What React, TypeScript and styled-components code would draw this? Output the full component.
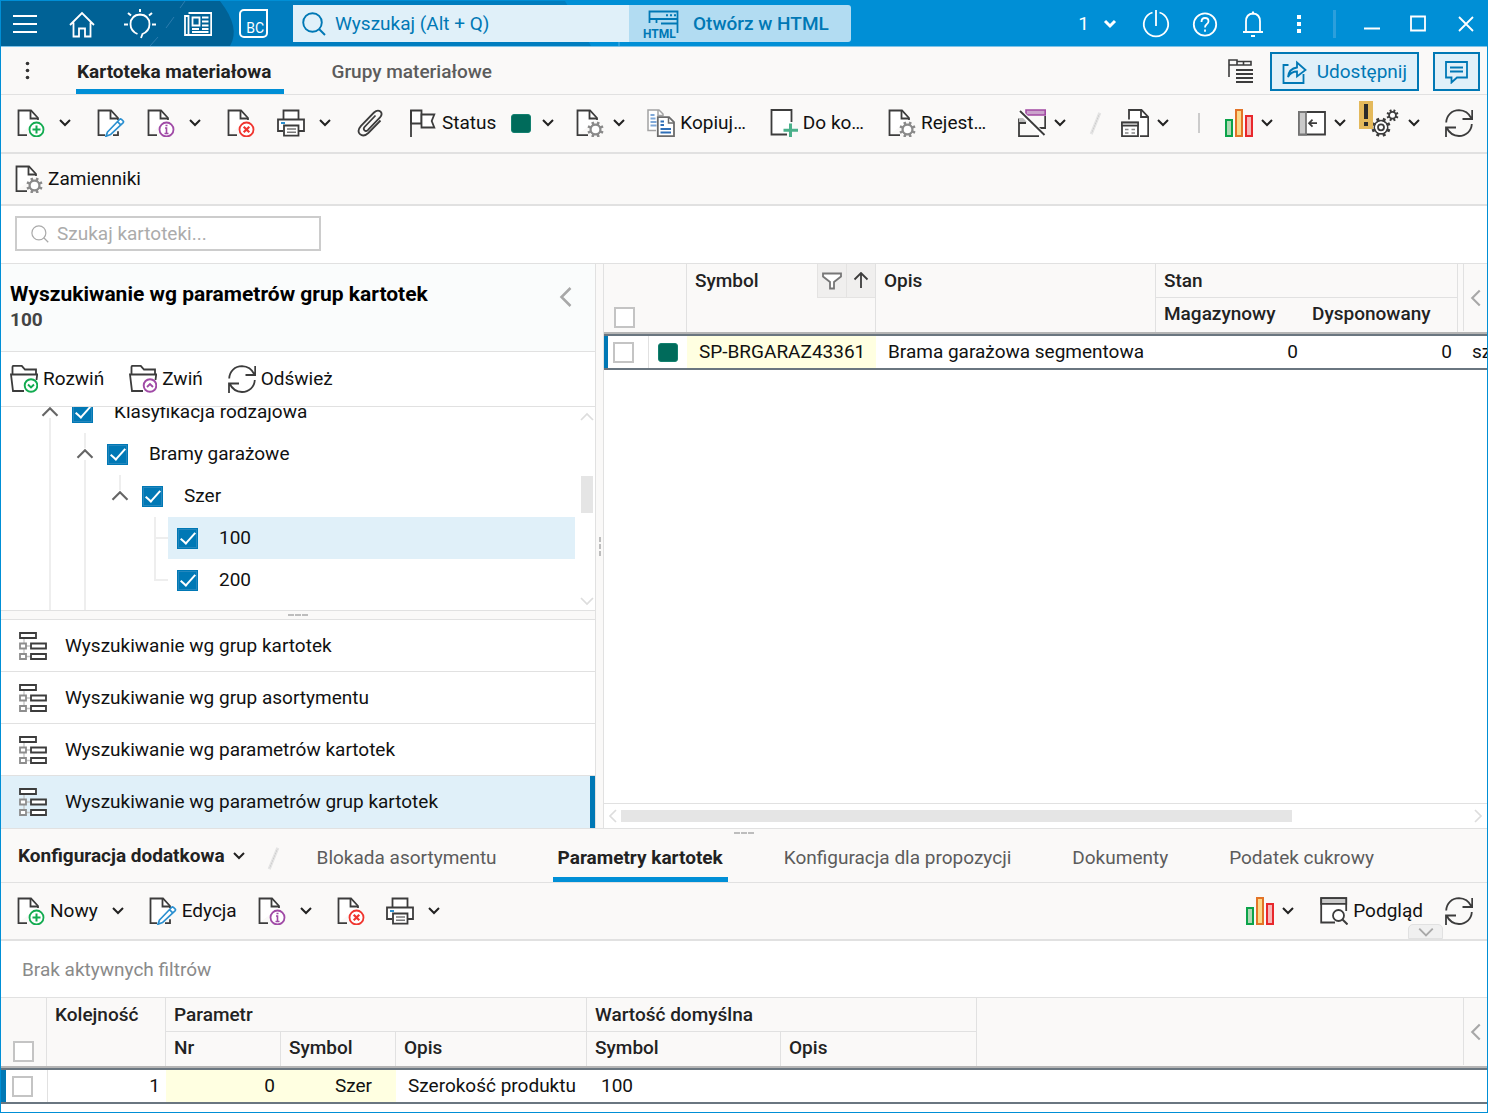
import React from "react";
import styled, { createGlobalStyle, css } from "styled-components";

const c = {
  brand: "#008fd6",
  brandMid: "#007dbf",
  brandDeep: "#006296",
  accent: "#0078b5",
  pale: "#e0f0f9",
  chrome: "#faf9f8",
  line: "#e1e1e1",
  ink: "#3c3c3c",
  key: "#ffffe1",
  status: "#006b5b",
};

const GlobalStyle = createGlobalStyle`
  *, *::before, *::after { box-sizing: border-box; }
  body { margin: 0; font-family: Roboto, "Noto Sans", sans-serif; font-size: 19px; line-height: 24px; color: #111; background: #fff; }
  button, input { font: inherit; color: inherit; }
  button { display: inline-flex; align-items: center; padding: 0; border: 0; background: none; white-space: nowrap; }
  svg { display: block; flex: none; }
  h2, p, ul { margin: 0; padding: 0; }
  ul { list-style: none; }
`;

/* ---------- icons ---------- */

const Svg = ({ w = 28, h = 28, children }: { w?: number; h?: number; children: React.ReactNode }) => (
  <svg width={w} height={h} viewBox={`0 0 ${w} ${h}`} fill="none" stroke={c.ink} strokeWidth="1.8" aria-hidden="true">
    {children}
  </svg>
);

const Chevron = ({ color = "#222" }: { color?: string }) => (
  <svg width="12" height="8" viewBox="0 0 12 8" fill="none" stroke={color} strokeWidth="2" aria-hidden="true">
    <path d="M1 1l5 5 5-5" />
  </svg>
);

const Page = ({ tail = 11 }: { tail?: number }) => (
  <>
    <path d={`M${tail} 26H1.5V1.5H14l6.5 7.5V11.500L2 25z`} fill="#fff" stroke="none" />
    <path d={`M${tail} 26.200H1.500V1.500H14l7 7.500V11`} />
    <path d="M13.500 2v7.500H21" />
  </>
);

const Disc = ({ color, children }: { color: string; children: React.ReactNode }) => (
  <g stroke={color}>
    <circle cx="19.500" cy="20.500" r="7" fill="#fff" />
    {children}
  </g>
);

const NewIcon = () => (
  <Svg>
    <Page tail={10} />
    <Disc color="#12ab50"><path d="M19.500 16.500v8M15.500 20.500h8" strokeWidth="2" /></Disc>
  </Svg>
);
const EditIcon = () => (
  <Svg>
    <path d="M8 26.200H1.500V1.500H14l7 7.500V11" fill="#fff" />
    <path d="M13.500 2v7.500H21M16 26.200h5v-4" />
    <path d="M10.500 23l12-12.500q1-1 2 0l1.500 1.300q1 1 0 2L13.500 25.500 9 27.200zM20.500 12.700l3.200 3.100" stroke="#2a8fd0" fill="#fff" strokeWidth="1.700" />
  </Svg>
);
const InfoIcon = () => (
  <Svg>
    <Page tail={10} />
    <Disc color="#a04aa6"><path d="M18 19h1.500v5.500M17.500 24.500h4M18.500 16.500h2" strokeWidth="1.600" /></Disc>
  </Svg>
);
const DeleteIcon = () => (
  <Svg>
    <Page tail={10} />
    <Disc color="#f0352f"><path d="M16.700 17.700l5.600 5.600M22.300 17.700l-5.600 5.600" strokeWidth="2.200" /></Disc>
  </Svg>
);
const gearTeeth = (cx: number, cy: number, r: number, out: number) =>
  [0, 45, 90, 135, 180, 225, 270, 315]
    .map((a) => {
      const t = ((a + 22.5) * Math.PI) / 180;
      return `M${cx + r * Math.cos(t)} ${cy + r * Math.sin(t)}L${cx + out * Math.cos(t)} ${cy + out * Math.sin(t)}`;
    })
    .join("");
const PageGearIcon = () => (
  <Svg>
    <Page tail={12} />
    <circle cx="19.500" cy="20.500" r="4.900" stroke="#8a8a8a" strokeWidth="2.200" fill="#fff" />
    <path d={gearTeeth(19.5, 20.5, 5, 8.2)} stroke="#8a8a8a" strokeWidth="2.600" />
  </Svg>
);
const PrintIcon = () => (
  <Svg>
    <path d="M6.500 10V1.500h15V10" fill="#fff" />
    <path d="M6 22H1V10.500h26V22h-5" fill="#fff" />
    <path d="M7 16.500h14.500v10.200H7z" fill="#fff" />
    <path d="M4 14h4" stroke="#2a8fd0" strokeWidth="2" />
    <path d="M10 20h9M10 23.300h9" stroke="#777" strokeWidth="1.400" />
  </Svg>
);
const ClipIcon = () => (
  <Svg>
    <path d="M18.500 6.500L7.500 18q-1.500 2 0 3.400 1.500 1.400 3.300-.3L23 8.500q3-3.600.4-6Q20.500.300 17 3.500L4 16.800q-4.400 5-1 8.400 3.600 3.200 8.300-1.200L23.500 11.500" />
  </Svg>
);
const FlagIcon = () => (
  <Svg>
    <path d="M2 1.500h10.500v13H2z" fill="#fff" />
    <path d="M12.500 5.500h12.800l-2.600 6.500 2.600 6.500H12.500z" fill="#fff" />
    <path d="M2 1v27" />
  </Svg>
);
const CopyIcon = () => (
  <Svg>
    <path d="M9 21.500H1V1h11l4 4v2" stroke="#a3a3a3" fill="#fff" strokeWidth="1.500" />
    <path d="M11 1v5.500h5" stroke="#a3a3a3" strokeWidth="1.500" />
    <path d="M3.500 6h4M3.500 9.500h5M3.500 13h6M3.500 16.500h6" stroke="#7fa8d8" />
    <path d="M10.800 8.200H22l5 5v13.900H10.800z" stroke="#6b6b6b" fill="#fff" />
    <path d="M21.500 8.500V14H27" stroke="#6b6b6b" strokeWidth="1.500" />
    <path d="M13.500 12.500h3.500M13.500 16h3.500M13.500 20h10.500M13.500 23.500h10.500" stroke="#2f6fb7" />
  </Svg>
);
const AddSheetIcon = () => (
  <Svg>
    <path d="M17 25.500H1.500V1H21.500V13" fill="#fff" />
    <path d="M20.500 14.500V28M13.500 21.300H28" stroke="#4ab08a" strokeWidth="3" />
  </Svg>
);
const WindowOffIcon = () => (
  <Svg>
    <path d="M8 1h19.200v5H8z" stroke="#a24aa3" fill="#cba3cc" strokeWidth="1.600" />
    <path d="M27.200 7v12H21" fill="none" />
    <path d="M1 9.500V27.200h20M1 14h7" />
    <path d="M1 9h5l3 4H1z" fill="#bbb" stroke="none" />
    <path d="M1.500 2L26 26.500" stroke="#fff" strokeWidth="5" />
    <path d="M2 2l24.500 24" strokeWidth="1.900" />
  </Svg>
);
const FormPageIcon = () => (
  <Svg>
    <path d="M8 10.500V1h12.500l6.700 7V27.200H19" fill="#fff" />
    <path d="M20 1v7h7" />
    <path d="M1 13.500h16v13.700H1z" fill="#fff" />
    <path d="M1 13.500h16v3.200H1z" fill="#bbb" strokeWidth="1.500" />
    <path d="M4 20.500h3.500M10.500 20.500H14M4 24h3.500M10.500 24H14" stroke="#888" strokeWidth="1.400" />
  </Svg>
);
const ChartIcon = () => (
  <Svg>
    <g strokeWidth="2">
      <path d="M1 11h6v16H1z" fill="#aed8b4" stroke="#0ba34a" />
      <path d="M11 1h6v26h-6z" fill="#fbd98a" stroke="#e37427" />
      <path d="M21 7h6v20h-6z" fill="#f6b7b8" stroke="#e8282c" />
    </g>
  </Svg>
);
const PanelIcon = () => (
  <Svg>
    <path d="M1 3h26v22.500H1z" fill="#fff" />
    <path d="M1 3h7v22.500H1z" fill="#c9c9c9" stroke="#777" />
    <path d="M11 14.200h8M14.500 10.700L11 14.200l3.500 3.500" strokeWidth="1.700" />
  </Svg>
);
const GearsIcon = () => (
  <Svg>
    <circle cx="10" cy="18.300" r="6.600" fill="#fff" />
    <path d={gearTeeth(10, 18.3, 6.800, 9.600)} strokeWidth="3" />
    <circle cx="10" cy="18.300" r="5.800" stroke="none" fill="#fff" />
    <circle cx="10" cy="18.300" r="3" />
    <circle cx="21.500" cy="6.300" r="3.400" fill="#fff" />
    <path d={gearTeeth(21.5, 6.3, 3.6, 6)} strokeWidth="2" />
  </Svg>
);
const RefreshIcon = () => (
  <Svg>
    <path d="M1.200 13.500C1.500 6 7 1.200 14 1.200q8.500.3 12.500 8.300M27.200 1v9H17.500" />
    <path d="M26.800 15C26.500 22 21 27 14 27q-8.500-.3-12.500-8.500M1 28v-9.500h10" />
  </Svg>
);
const FolderIcon = ({ up = false }: { up?: boolean }) => (
  <Svg>
    <path d="M2.500 9V2q0-1.200 1.200-1.200h8L15 4.500h11V9" fill="#fff" />
    <path d="M14 26H3L1 9.500h26.200L26.500 15" fill="#fff" />
    <g stroke={up ? "#a04aa6" : "#12ab50"} strokeWidth="1.900">
      <circle cx="21" cy="20.500" r="6.300" fill="#fff" />
      <path d={up ? "M18 22l3-3 3 3" : "M18 19.500l3 3 3-3"} />
    </g>
  </Svg>
);
const PreviewIcon = () => (
  <Svg>
    <path d="M15 25.500H1.200V1.200h25V14" fill="#fff" />
    <path d="M1.200 1.200h25V6.800h-25z" fill="#c9c9c9" />
    <circle cx="18.500" cy="18.500" r="5.500" fill="#fff" />
    <path d="M22.500 22.500L27.500 27.500" strokeWidth="2" />
  </Svg>
);
const TreeIcon = () => (
  <Svg>
    <path d="M5 7v16M6 14h6M6 24.500h6" stroke="#c4c4c4" strokeWidth="1.300" />
    <path d="M1 1h16v5H1z" fill="#fff" />
    <path d="M1 11.500h6v5H1zM1 22h6v5H1z" fill="#fff" stroke="#8d8d8d" />
    <path d="M12 11.500h15v5H12zM12 22h15v5H12z" fill="#fff" />
  </Svg>
);
const Magnifier = ({ size, color }: { size: number; color: string }) => (
  <svg width={size} height={size} viewBox="0 0 24 24" fill="none" stroke={color} strokeWidth={size > 20 ? 1.900 : 1.600} aria-hidden="true">
    <circle cx="10.500" cy="10.500" r="9.300" />
    <path d="M17 17l6 6" />
  </svg>
);
const AngleIcon = ({ dir, color = "#a8a8a8", size = 16 }: { dir: "left" | "right" | "up" | "down"; color?: string; size?: number }) => {
  const d = { left: "M11 2L5 8l6 6", right: "M5 2l6 6-6 6", up: "M2 11l6-6 6 6", down: "M2 5l6 6 6-6" }[dir];
  return (
    <svg width={size} height={size} viewBox="0 0 16 16" fill="none" stroke={color} strokeWidth="1.700" aria-hidden="true">
      <path d={d} />
    </svg>
  );
};

/* ---------- shell ---------- */

const Window = styled.div`
  display: flex;
  flex-direction: column;
  min-height: 100vh;
  border: 1px solid ${c.brand};
  border-top: 0;
`;

const TitleBar = styled.header`
  position: relative;
  display: flex;
  align-items: center;
  height: 47px;
  padding: 1px 0 0 11px;
  color: #fff;
  background: ${c.brand};
  border-bottom: 1px solid #7ec3e8;
  svg { stroke: currentColor; }
`;
const Backdrop = styled.div`
  position: absolute;
  inset: 0;
  overflow: hidden;
`;
const MainNav = styled.nav`
  position: relative;
  display: flex;
  align-items: center;
  gap: 28px;
`;
const BarButton = styled.button`
  position: relative;
`;
const BadgeButton = styled(BarButton)`
  align-items: flex-end;
  justify-content: flex-end;
  width: 29px;
  height: 29px;
  margin: 0 25px 0 27px;
  padding: 0 2px;
  border: 2px solid #fff;
  border-radius: 5px 0 5px 5px;
  font-size: 14px;
  line-height: 16px;
`;
const GlobalSearch = styled.form`
  position: relative;
  display: flex;
  height: 37px;
  border-radius: 0 3px 3px 0;
  overflow: hidden;
  color: ${c.accent};
`;
const SearchField = styled.label`
  display: flex;
  align-items: center;
  gap: 9px;
  width: 336px;
  padding-left: 9px;
  background: ${c.pale};
`;
const BareInput = styled.input<{ $hint: string }>`
  flex: 1;
  min-width: 0;
  padding: 0;
  border: 0;
  outline: 0;
  background: none;
  &::placeholder { color: ${(p) => p.$hint}; opacity: 1; }
`;
const HtmlButton = styled.button`
  gap: 14px;
  padding: 0 22px 0 14px;
  font-weight: 500;
  background: #b2dcf2;
`;
const WindowTools = styled.div`
  position: relative;
  display: flex;
  align-items: center;
  margin-left: auto;
  padding-right: 11px;
`;
const ToolsCluster = styled.div<{ $gap: number; $after?: number }>`
  display: flex;
  align-items: center;
  gap: ${(p) => p.$gap}px;
  margin-right: ${(p) => p.$after ?? 0}px;
`;
const CountButton = styled.button`
  gap: 14px;
`;
const BarDivider = styled.span`
  width: 3px;
  height: 28px;
  background: #2c9fdc;
`;

/* ---------- tabs ---------- */

const TabBar = styled.div<{ $h: number; $pl: number }>`
  display: flex;
  align-items: stretch;
  height: ${(p) => p.$h}px;
  padding: 0 7px 0 ${(p) => p.$pl}px;
  background: ${c.chrome};
  border-bottom: 1px solid ${c.line};
`;
const TabList = styled.div<{ $gap: number; $ml: number }>`
  display: flex;
  gap: ${(p) => p.$gap}px;
  margin-left: ${(p) => p.$ml}px;
`;
const Tab = styled.button<{ $active?: boolean; $main?: boolean }>`
  padding: ${(p) => (p.$main ? "7px 13px 0 1px" : "4px 5px 0")};
  border-bottom: 5px solid transparent;
  color: #5c5c5c;
  font-weight: ${(p) => (p.$main ? 500 : 400)};
  ${(p) => p.$active && css`
    color: #222;
    font-weight: 700;
    border-bottom-color: ${c.brand};
  `}
`;
const TabActions = styled.div`
  display: flex;
  align-items: center;
  gap: 14px;
  margin-left: auto;
  padding-top: 2px;
`;
const OutlineButton = styled.button`
  gap: 10px;
  height: 39px;
  padding: 0 10px;
  color: ${c.accent};
  background: ${c.pale};
  border: 2px solid ${c.accent};
  svg { stroke: currentColor; }
`;
const SectionTitle = styled.button`
  gap: 8px;
  padding-bottom: 4px;
  font-weight: 700;
  color: #222;
`;
const Slash = styled.span`
  width: 1px;
  height: 21px;
  margin: 0 4px;
  background: #ccc;
  outline: 1px solid #e2e2e2;
  transform: rotate(22deg);
`;
const Bar = styled.span`
  width: 2px;
  height: 20px;
  margin: 0 4px;
  background: #ccc;
`;

/* ---------- toolbars ---------- */

const Toolbar = styled.div<{ $h: number; $plain?: boolean; $px?: number }>`
  position: relative;
  display: flex;
  align-items: center;
  justify-content: space-between;
  height: ${(p) => p.$h}px;
  padding: 0 14px ${(p) => (p.$plain ? 0 : 1)}px ${(p) => p.$px ?? 16}px;
  background: ${(p) => (p.$plain ? "#fff" : c.chrome)};
  border-bottom: ${(p) => (p.$plain ? 1 : 2)}px solid ${c.line};
`;
const Tools = styled.div<{ $gap: number }>`
  display: flex;
  align-items: center;
  gap: ${(p) => p.$gap}px;
`;
const ToolButton = styled.button`
  position: relative;
  gap: 5px;
  height: 36px;
`;
const Split = styled.div<{ $gap: number }>`
  display: flex;
  align-items: center;
  gap: ${(p) => p.$gap}px;
`;
const DropButton = styled.button`
  justify-content: center;
  width: 20px;
  height: 36px;
`;
const Swatch = styled.span<{ $ml?: number }>`
  display: block;
  width: 20px;
  height: 19px;
  margin-left: ${(p) => p.$ml ?? 0}px;
  background: ${c.status};
  border: 1px solid #12806f;
  border-radius: 3px;
`;
const WarnBadge = styled.span`
  position: absolute;
  left: -12px;
  top: -4px;
  display: flex;
  justify-content: center;
  width: 14px;
  height: 28px;
  background: #e4b95b;
`;
const MiniToggle = styled.button`
  position: absolute;
  right: 44px;
  bottom: 0;
  justify-content: center;
  width: 35px;
  height: 15px;
  background: #f0f0f0;
  border: 1px solid ${c.line};
  border-radius: 5px 5px 0 0;
`;

const Drop = ({ label }: { label: string }) => (
  <DropButton aria-label={label}><Chevron /></DropButton>
);

/* ---------- search row ---------- */

const FilterRow = styled.div`
  padding: 10px 14px 12px;
  border-bottom: 1px solid ${c.line};
`;
const FilterBox = styled.label`
  display: flex;
  align-items: center;
  gap: 8px;
  width: 306px;
  height: 35px;
  padding: 0 14px;
  border: 2px solid #ccc;
`;

/* ---------- work area ---------- */

const Work = styled.main`
  display: flex;
  flex: 1;
  min-height: 0;
  border-bottom: 1px solid ${c.line};
`;
const SidePane = styled.section`
  display: flex;
  flex-direction: column;
  flex: 0 0 594px;
`;
const PaneHead = styled.div`
  display: flex;
  align-items: flex-start;
  justify-content: space-between;
  height: 88px;
  padding: 17px 17px 0 9px;
  background: #fafcfc;
  border-bottom: 1px solid ${c.line};
  h2 { font-size: 21px; line-height: 26px; font-weight: 700; color: #000; }
  p { line-height: 26px; font-weight: 700; color: #444; }
  button { padding: 4px 0 0; }
`;
const VSplitter = styled.div`
  display: flex;
  flex: 0 0 9px;
  flex-direction: column;
  align-items: center;
  justify-content: center;
  gap: 2px;
  background: ${c.chrome};
  border: solid ${c.line};
  border-width: 0 1px;
`;
const HSplitter = styled.div`
  display: flex;
  align-items: center;
  justify-content: center;
  gap: 1px;
  height: 10px;
  background: ${c.chrome};
  border: solid ${c.line};
  border-width: 1px 0;
`;
const Grip = styled.i<{ $v?: boolean }>`
  width: ${(p) => (p.$v ? 2 : 6)}px;
  height: ${(p) => (p.$v ? 5 : 2)}px;
  background: #bdbdbd;
`;

const TreeBox = styled.div`
  display: flex;
  flex: 1 1 0;
  min-height: 0;
  overflow: hidden;
`;
const TreeList = styled.ul`
  flex: 1;
  margin-top: -16px;
  padding-left: 27px;
`;
const TreeRow = styled.li`
  display: flex;
  height: 42px;
`;
type GuideKind = "line" | "none" | "top" | "tee" | "elbow";
const rail = "linear-gradient(#eee,#eee)";
const guides: Record<GuideKind, string> = {
  line: `${rail} 21px 0 / 2px 100% no-repeat`,
  none: "none",
  top: `${rail} 21px 0 / 2px 21px no-repeat`,
  tee: `${rail} 21px 0 / 2px 100% no-repeat, ${rail} 21px 20px / 14px 2px no-repeat`,
  elbow: `${rail} 21px 0 / 2px 21px no-repeat, ${rail} 21px 20px / 14px 2px no-repeat`,
};
const Guide = styled.span<{ $kind: GuideKind }>`
  display: flex;
  align-items: center;
  justify-content: flex-end;
  width: 35px;
  padding-right: 3px;
  background: ${(p) => guides[p.$kind]};
`;
const TwistButton = styled.button`
  height: 12px;
  background: #fff;
`;
const TreeLabel = styled.label<{ $on?: boolean }>`
  display: flex;
  flex: 1;
  align-items: center;
  gap: 21px;
  padding-left: 9px;
  background: ${(p) => (p.$on ? c.pale : "none")};
`;
const Check = styled.input.attrs({ type: "checkbox" })`
  appearance: none;
  display: grid;
  place-items: center;
  flex: none;
  width: 21px;
  height: 21px;
  margin: 0;
  background: #fff;
  border: 2px solid #c4c4c4;
  &:checked {
    background: ${c.accent};
    border: 1px solid ${c.accent};
    box-shadow: inset 0 0 0 1px #2587bd;
  }
  &:checked::before {
    content: "";
    width: 8px;
    height: 15px;
    margin-bottom: 5px;
    border: solid #fff;
    border-width: 0 2px 2px 0;
    transform: rotate(42deg);
  }
`;
const VScroll = styled.div`
  display: flex;
  flex-direction: column;
  align-items: center;
  width: 20px;
  padding: 2px 0 1px 4px;
`;
const VThumb = styled.span`
  width: 12px;
  height: 37px;
  margin: 51px 0 auto;
  background: #e5e5e5;
`;
const ModeButton = styled.button<{ $on?: boolean }>`
  width: 100%;
  height: 52px;
  gap: 18px;
  padding-left: 18px;
  border-bottom: 1px solid ${c.line};
  ${(p) => p.$on && css`
    background: ${c.pale};
    border-right: 5px solid ${c.accent};
    border-bottom: 0;
  `}
`;

/* ---------- tables ---------- */

const GridPane = styled.section`
  display: flex;
  flex: 1;
  flex-direction: column;
  min-width: 0;
`;
const DataTable = styled.table`
  width: 100%;
  table-layout: fixed;
  border-collapse: separate;
  border-spacing: 0;
`;
const Th = styled.th<{ $edge?: boolean; $under?: boolean; $low?: number; $flush?: boolean; $sub?: boolean }>`
  height: 34px;
  padding: ${(p) => (p.$flush ? "0 0 0 8px" : p.$low ? `0 0 4px ${p.$low}px` : p.$sub ? "4px 0 0 8px" : "5px 0 0 8px")};
  overflow: hidden;
  color: #222;
  font-weight: 500;
  text-align: left;
  white-space: nowrap;
  vertical-align: ${(p) => (p.$low ? "bottom" : "top")};
  background: ${c.chrome};
  border: solid ${c.line};
  border-width: 0 ${(p) => (p.$edge ? 1 : 0)}px ${(p) => (p.$under ? 1 : 0)}px 0;
`;
const RailTh = styled(Th)`
  padding: 0;
`;
const Td = styled.td<{ $pad?: number; $right?: boolean; $hot?: boolean; $edge?: boolean; $lead?: number }>`
  height: 36px;
  padding: 0 ${(p) => (p.$right ? p.$pad ?? 6 : 0)}px 0 ${(p) => (p.$right ? 0 : p.$pad ?? 12)}px;
  overflow: hidden;
  text-align: ${(p) => (p.$right ? "right" : "left")};
  white-space: nowrap;
  background: ${(p) => (p.$hot ? c.key : "#fff")};
  border: solid #6a7680;
  border-width: 2px 0;
  box-shadow: ${(p) => (p.$lead ? `inset ${p.$lead}px 0 ${c.accent}` : p.$edge ? `inset 1px 0 ${c.line}` : "none")};
`;
const HeadRule = styled.td`
  height: 2px;
  padding: 0;
  background: #b5b5b5;
`;
const HeadFlex = styled.div`
  display: flex;
  justify-content: space-between;
  line-height: 34px;
`;
const HeadTools = styled.span`
  display: flex;
`;
const HeadButton = styled.button`
  justify-content: center;
  width: 29px;
  height: 34px;
  background: #f0efee;
  border: solid #e4e3e2;
  border-width: 0 0 1px 1px;
`;
const RailCell = styled.div`
  display: flex;
  align-items: center;
  height: 67px;
  margin-left: 5px;
  padding-left: 2px;
  border-left: 1px solid ${c.line};
`;
const HScroll = styled.div`
  display: flex;
  align-items: center;
  height: 25px;
  margin-top: auto;
  padding: 0 1px;
  border-top: 1px solid ${c.line};
`;
const HTrack = styled.div`
  flex: 1;
`;
const HThumb = styled.div`
  width: 79%;
  height: 12px;
  background: #e5e5e5;
`;
const GripRow = styled.div`
  display: flex;
  justify-content: center;
  gap: 1px;
  padding-top: 3px;
  background: ${c.chrome};
`;
const SlashSlot = styled.div`
  display: flex;
  align-items: center;
  margin-left: 24px;
`;
const EmptyFilters = styled.p`
  padding: 17px 21px 15px;
  color: #8a8a8a;
  border-bottom: 1px solid ${c.line};
`;
const LowerGrid = styled.section`
  padding-bottom: 8px;
`;

/* ---------- data ---------- */

type Node = { label: string; guides: GuideKind[]; leaf?: boolean; on?: boolean };
const nodes: Node[] = [
  { label: "Klasyfikacja rodzajowa", guides: ["line"] },
  { label: "Bramy garażowe", guides: ["line", "line"] },
  { label: "Szer", guides: ["line", "line", "top"] },
  { label: "100", guides: ["line", "line", "none", "tee"], leaf: true, on: true },
  { label: "200", guides: ["line", "line", "none", "elbow"], leaf: true },
];
const modes = [
  "Wyszukiwanie wg grup kartotek",
  "Wyszukiwanie wg grup asortymentu",
  "Wyszukiwanie wg parametrów kartotek",
  "Wyszukiwanie wg parametrów grup kartotek",
];
const lowerTabs = ["Blokada asortymentu", "Parametry kartotek", "Konfiguracja dla propozycji", "Dokumenty", "Podatek cukrowy"];

/* ---------- sections ---------- */

const Title = () => (
  <TitleBar>
    <Backdrop>
      <svg width="700" height="46" viewBox="0 0 700 46" aria-hidden="true">
        <g stroke="none">
          <path d="M0 1H564L590 46H0z" fill={c.brandMid} />
          <path d="M0 1H219Q240 28 229 46H0z" fill={c.brandDeep} />
        </g>
        <path d="M184 1l-5 7M173 17l-8 11M157 37l-8 9" stroke="#2c7cae" strokeWidth="1" />
        <path d="M618 42v4" stroke="#2c9fdc" strokeWidth="2" />
      </svg>
    </Backdrop>
    <MainNav>
      <BarButton aria-label="Menu">
        <Svg><path d="M1 6h24M1 14h24M1 22h24" strokeWidth="2" /></Svg>
      </BarButton>
      <BarButton aria-label="Start">
        <Svg><path d="M2 15L14 3l12 12M5.500 12.500v14H11v-8h6v8h5.500v-14" /></Svg>
      </BarButton>
      <BarButton aria-label="Porady">
        <Svg w={32} h={30}>
          <path d="M13.500 25Q6.500 22 6.500 15q.5-9 9.500-9.500 9 .5 9.500 9.500 0 7-7 10l-1.500 4" />
          <path d="M16 0v3M4 4l3 2.500M28 4l-3 2.500M0 15.500h4M28 15.500h4" strokeWidth="2" />
        </Svg>
      </BarButton>
      <BarButton aria-label="Aktualności">
        <Svg>
          <path d="M4.500 3h22.700v22H1V6h3.500v19" />
          <path d="M8.500 7.500h7v8h-7zM18 7.500h6.500M18 11.500h6.500M18 15.500h6.500M8 19h7M18 19h6.500M8 22h16.500" />
        </Svg>
      </BarButton>
    </MainNav>
    <BadgeButton>BC</BadgeButton>
    <GlobalSearch onSubmit={(e) => e.preventDefault()}>
      <SearchField>
        <Magnifier size={24} color={c.accent} />
        <BareInput $hint={c.accent} aria-label="Wyszukaj" placeholder="Wyszukaj (Alt + Q)" />
      </SearchField>
      <HtmlButton type="button">
        <Svg w={36} h={30}>
          <path d="M6.500 14V2.500h28V24M6.500 10h28M13.500 10v4M18 14.500h16" />
          <path d="M23 6.200h2M27 6.200h2M31 6.200h2" strokeWidth="2" />
          <text x="0" y="28.500" fontSize="12" fontWeight="700" fill={c.accent} stroke="none">HTML</text>
        </Svg>
        Otwórz w HTML
      </HtmlButton>
    </GlobalSearch>
    <WindowTools>
      <ToolsCluster $gap={21} $after={18}>
        <CountButton aria-label="Liczba sesji: 1">
          1
          <svg width="14" height="10" viewBox="0 0 14 10" fill="none" strokeWidth="3" aria-hidden="true"><path d="M2 2l5 5 5-5" /></svg>
        </CountButton>
        <BarButton aria-label="Wyloguj">
          <Svg w={36}><path d="M14.500 2.500A12.200 12.200 0 1 0 21.500 2.500M18 0v16" /></Svg>
        </BarButton>
      </ToolsCluster>
      <ToolsCluster $gap={24} $after={23}>
        <BarButton aria-label="Pomoc">
          <Svg w={26}>
            <circle cx="13" cy="14.500" r="11.200" />
            <path d="M9.500 12q0-4 3.500-4t3.500 3.200q0 1.800-1.800 3Q13 15.500 13 17.500M13 19.500v2.200" />
          </Svg>
        </BarButton>
        <BarButton aria-label="Powiadomienia">
          <Svg w={22}>
            <path d="M1 22h20M4 22V11.500q0-7.500 7-8 7 .5 7 8V22" />
            <path d="M9 26h4M10 2.500h2" strokeWidth="2" />
          </Svg>
        </BarButton>
        <BarButton aria-label="Więcej">
          <Svg w={22}><path d="M11 5v4M11 12v4M11 19v4" strokeWidth="4" /></Svg>
        </BarButton>
      </ToolsCluster>
      <ToolsCluster $gap={28}>
        <BarDivider />
        <BarButton aria-label="Minimalizuj"><Svg w={18} h={18}><path d="M0 13.500h16" strokeWidth="2" /></Svg></BarButton>
        <BarButton aria-label="Maksymalizuj"><Svg w={18} h={18}><path d="M1 1.500h14v14H1z" /></Svg></BarButton>
        <BarButton aria-label="Zamknij"><Svg w={20} h={18}><path d="M3 2l14 14M17 2L3 16" /></Svg></BarButton>
      </ToolsCluster>
    </WindowTools>
  </TitleBar>
);

const MainTabs = () => (
  <TabBar $h={48} $pl={24}>
    <button aria-label="Opcje widoku">
      <svg width="5" height="20" viewBox="0 0 5 20" fill="#333" aria-hidden="true">
        <circle cx="2.500" cy="2.500" r="1.800" /><circle cx="2.500" cy="9.500" r="1.800" /><circle cx="2.500" cy="16.500" r="1.800" />
      </svg>
    </button>
    <TabList $gap={46} $ml={46} role="tablist">
      <Tab $main $active role="tab" aria-selected="true">Kartoteka materiałowa</Tab>
      <Tab $main role="tab" aria-selected="false">Grupy materiałowe</Tab>
    </TabList>
    <TabActions>
      <ToolButton aria-label="Układ zakładek">
        <Svg>
          <path d="M1 19V2h8v5H1M9 3.500h6.500V7M15.500 3.500H23V7H9" strokeWidth="1.600" />
          <path d="M8 12h17M8 16h17M8 20h17M8 24h17" strokeWidth="2" />
        </Svg>
      </ToolButton>
      <OutlineButton>
        <Svg w={25} h={26}>
          <path d="M6.500 6H1.500v18h20v-9" />
          <path d="M6 18Q7 9.500 15 8.500V3.500l8.500 7.500-8.500 6.500v-5Q9 12.500 6 18z" />
        </Svg>
        Udostępnij
      </OutlineButton>
      <OutlineButton aria-label="Komentarze">
        <Svg w={23} h={24}>
          <path d="M1 2h21v15.500H12l-5.500 5v-5H1z" />
          <path d="M5 7.500h13M5 11.500h13" />
        </Svg>
      </OutlineButton>
    </TabActions>
  </TabBar>
);

const MainToolbar = () => (
  <Toolbar $h={59}>
    <Tools $gap={24}>
      <Tools $gap={22}>
        <Split $gap={10}><ToolButton aria-label="Nowy"><NewIcon /></ToolButton><Drop label="Nowy: więcej" /></Split>
        <ToolButton aria-label="Edycja"><EditIcon /></ToolButton>
        <Split $gap={10}><ToolButton aria-label="Informacje"><InfoIcon /></ToolButton><Drop label="Informacje: więcej" /></Split>
        <ToolButton aria-label="Usuń"><DeleteIcon /></ToolButton>
        <Split $gap={10}><ToolButton aria-label="Drukuj"><PrintIcon /></ToolButton><Drop label="Drukuj: więcej" /></Split>
        <ToolButton aria-label="Załączniki"><ClipIcon /></ToolButton>
      </Tools>
      <Tools $gap={18}>
        <Split $gap={7}><ToolButton><FlagIcon />Status<Swatch $ml={10} /></ToolButton><Drop label="Status: więcej" /></Split>
        <Split $gap={5}><ToolButton aria-label="Operacje"><PageGearIcon /></ToolButton><Drop label="Operacje: więcej" /></Split>
        <ToolButton><CopyIcon />Kopiuj…</ToolButton>
      </Tools>
      <ToolButton><AddSheetIcon />Do ko…</ToolButton>
      <ToolButton><PageGearIcon />Rejest…</ToolButton>
    </Tools>
    <Tools $gap={21}>
      <Split $gap={4}><ToolButton aria-label="Wyłącz okno"><WindowOffIcon /></ToolButton><Drop label="Okno: więcej" /></Split>
      <Slash />
      <Split $gap={4}><ToolButton aria-label="Formularz"><FormPageIcon /></ToolButton><Drop label="Formularz: więcej" /></Split>
      <Bar />
      <Split $gap={4}><ToolButton aria-label="Wykresy"><ChartIcon /></ToolButton><Drop label="Wykresy: więcej" /></Split>
      <Split $gap={4}><ToolButton aria-label="Panel boczny"><PanelIcon /></ToolButton><Drop label="Panel: więcej" /></Split>
      <Split $gap={5}>
        <ToolButton aria-label="Ustawienia">
          <GearsIcon />
          <WarnBadge>
            <svg width="4" height="28" viewBox="0 0 4 28" fill="#2b2b2b" aria-hidden="true"><path d="M0 3h4v15H0zM0 21h4v4H0z" /></svg>
          </WarnBadge>
        </ToolButton>
        <Drop label="Ustawienia: więcej" />
      </Split>
      <ToolButton aria-label="Odśwież"><RefreshIcon /></ToolButton>
    </Tools>
  </Toolbar>
);

const Side = () => (
  <SidePane>
    <PaneHead>
      <div>
        <h2>Wyszukiwanie wg parametrów grup kartotek</h2>
        <p>100</p>
      </div>
      <button aria-label="Zwiń panel"><AngleIcon dir="left" size={24} /></button>
    </PaneHead>
    <Toolbar $h={55} $plain $px={9}>
      <Tools $gap={25}>
        <ToolButton><FolderIcon />Rozwiń</ToolButton>
        <ToolButton><FolderIcon up />Zwiń</ToolButton>
        <ToolButton><RefreshIcon />Odśwież</ToolButton>
      </Tools>
    </Toolbar>
    <TreeBox>
      <TreeList>
        {nodes.map((n) => (
          <TreeRow key={n.label}>
            {n.guides.map((g, i) => (
              <Guide key={i} $kind={g}>
                {i === n.guides.length - 1 && !n.leaf && (
                  <TwistButton aria-label={`Zwiń ${n.label}`}><AngleIcon dir="up" color="#666" size={20} /></TwistButton>
                )}
              </Guide>
            ))}
            <TreeLabel $on={n.on}>
              <Check defaultChecked />
              {n.label}
            </TreeLabel>
          </TreeRow>
        ))}
        <TreeRow aria-hidden="true"><Guide $kind="line" /><Guide $kind="line" /></TreeRow>
      </TreeList>
      <VScroll>
        <AngleIcon dir="up" color="#ddd" />
        <VThumb />
        <AngleIcon dir="down" color="#ddd" />
      </VScroll>
    </TreeBox>
    <HSplitter><Grip /><Grip /><Grip /></HSplitter>
    {modes.map((m, i) => (
      <ModeButton key={m} $on={i === 3}><TreeIcon />{m}</ModeButton>
    ))}
  </SidePane>
);

const Items = () => (
  <GridPane>
    <DataTable>
      <colgroup>
        <col style={{ width: 44 }} /><col style={{ width: 39 }} /><col style={{ width: 189 }} /><col />
        <col style={{ width: 148 }} /><col style={{ width: 154 }} /><col style={{ width: 29 }} />
      </colgroup>
      <thead>
        <tr>
          <Th rowSpan={2} colSpan={2} $low={10} $edge><Check aria-label="Zaznacz wszystkie kartoteki" /></Th>
          <Th rowSpan={2} $edge $flush>
            <HeadFlex>
              Symbol
              <HeadTools>
                <HeadButton aria-label="Filtruj">
                  <Svg w={20} h={18}><path d="M1 1.500h18v3L12 10v6.500H8V10L1 4.500z" fill="#fff" stroke="#777" /></Svg>
                </HeadButton>
                <HeadButton aria-label="Sortuj rosnąco">
                  <Svg w={16} h={18}><path d="M8 16V1M1.500 7.500L8 1l6.500 6.500" /></Svg>
                </HeadButton>
              </HeadTools>
            </HeadFlex>
          </Th>
          <Th rowSpan={2} $edge>Opis</Th>
          <Th colSpan={2} $edge $under>Stan</Th>
          <RailTh rowSpan={2}><RailCell><AngleIcon dir="left" size={20} /></RailCell></RailTh>
        </tr>
        <tr>
          <Th $sub>Magazynowy</Th>
          <Th $sub $edge>Dysponowany</Th>
        </tr>
        <tr aria-hidden="true"><HeadRule colSpan={7} /></tr>
      </thead>
      <tbody>
        <tr>
          <Td $pad={9} $lead={4}><Check aria-label="Zaznacz SP-BRGARAZ43361" /></Td>
          <Td $pad={10} $edge><Swatch as="div" /></Td>
          <Td $hot>SP-BRGARAZ43361</Td>
          <Td>Brama garażowa segmentowa</Td>
          <Td $right>0</Td>
          <Td $right>0</Td>
          <Td $pad={14}>sz</Td>
        </tr>
      </tbody>
    </DataTable>
    <HScroll>
      <AngleIcon dir="left" color="#ddd" />
      <HTrack><HThumb /></HTrack>
      <AngleIcon dir="right" color="#ddd" />
    </HScroll>
  </GridPane>
);

const Lower = () => (
  <LowerGrid>
    <GripRow><Grip /><Grip /><Grip /></GripRow>
    <TabBar $h={49} $pl={17}>
      <SectionTitle>Konfiguracja dodatkowa<Chevron /></SectionTitle>
      <SlashSlot><Slash /></SlashSlot>
      <TabList $gap={51} $ml={34} role="tablist">
        {lowerTabs.map((t, i) => (
          <Tab key={t} $active={i === 1} role="tab" aria-selected={i === 1}>{t}</Tab>
        ))}
      </TabList>
    </TabBar>
    <Toolbar $h={58}>
      <Tools $gap={21}>
        <Split $gap={10}><ToolButton><NewIcon />Nowy</ToolButton><Drop label="Nowy parametr: więcej" /></Split>
        <ToolButton><EditIcon />Edycja</ToolButton>
        <Split $gap={10}><ToolButton aria-label="Informacje"><InfoIcon /></ToolButton><Drop label="Informacje: więcej" /></Split>
        <ToolButton aria-label="Usuń"><DeleteIcon /></ToolButton>
        <Split $gap={10}><ToolButton aria-label="Drukuj"><PrintIcon /></ToolButton><Drop label="Drukuj: więcej" /></Split>
      </Tools>
      <Tools $gap={22}>
        <Split $gap={4}><ToolButton aria-label="Wykresy"><ChartIcon /></ToolButton><Drop label="Wykresy: więcej" /></Split>
        <ToolButton><PreviewIcon />Podgląd</ToolButton>
        <ToolButton aria-label="Odśwież"><RefreshIcon /></ToolButton>
      </Tools>
      <MiniToggle aria-label="Rozwiń filtry"><AngleIcon dir="down" size={18} /></MiniToggle>
    </Toolbar>
    <EmptyFilters>Brak aktywnych filtrów</EmptyFilters>
    <DataTable>
      <colgroup>
        <col style={{ width: 46 }} /><col style={{ width: 119 }} /><col style={{ width: 115 }} /><col style={{ width: 115 }} />
        <col style={{ width: 191 }} /><col style={{ width: 194 }} /><col style={{ width: 196 }} /><col /><col style={{ width: 29 }} />
      </colgroup>
      <thead>
        <tr>
          <Th rowSpan={2} $low={12} $edge><Check aria-label="Zaznacz wszystkie parametry" /></Th>
          <Th rowSpan={2} $edge>Kolejność</Th>
          <Th colSpan={3} $edge $under>Parametr</Th>
          <Th colSpan={2} $edge $under>Wartość domyślna</Th>
          <Th rowSpan={2} />
          <RailTh rowSpan={2}><RailCell><AngleIcon dir="left" size={20} /></RailCell></RailTh>
        </tr>
        <tr>
          <Th $sub $edge>Nr</Th>
          <Th $sub $edge>Symbol</Th>
          <Th $sub $edge>Opis</Th>
          <Th $sub $edge>Symbol</Th>
          <Th $sub $edge>Opis</Th>
        </tr>
        <tr aria-hidden="true"><HeadRule colSpan={9} /></tr>
      </thead>
      <tbody>
        <tr>
          <Td $pad={11} $lead={5}><Check aria-label="Zaznacz parametr 1" /></Td>
          <Td $right $edge>1</Td>
          <Td $right $hot>0</Td>
          <Td $right $pad={24} $hot>Szer</Td>
          <Td>Szerokość produktu</Td>
          <Td $pad={14}>100</Td>
          <Td />
          <Td />
          <Td />
        </tr>
      </tbody>
    </DataTable>
  </LowerGrid>
);

export default function App() {
  return (
    <Window>
      <GlobalStyle />
      <Title />
      <MainTabs />
      <MainToolbar />
      <Toolbar $h={52} $px={14}>
        <ToolButton><PageGearIcon />Zamienniki</ToolButton>
      </Toolbar>
      <FilterRow>
        <FilterBox>
          <Magnifier size={18} color="#aaa" />
          <BareInput $hint="#ababab" aria-label="Szukaj kartoteki" placeholder="Szukaj kartoteki..." />
        </FilterBox>
      </FilterRow>
      <Work>
        <Side />
        <VSplitter><Grip $v /><Grip $v /><Grip $v /></VSplitter>
        <Items />
      </Work>
      <Lower />
    </Window>
  );
}
